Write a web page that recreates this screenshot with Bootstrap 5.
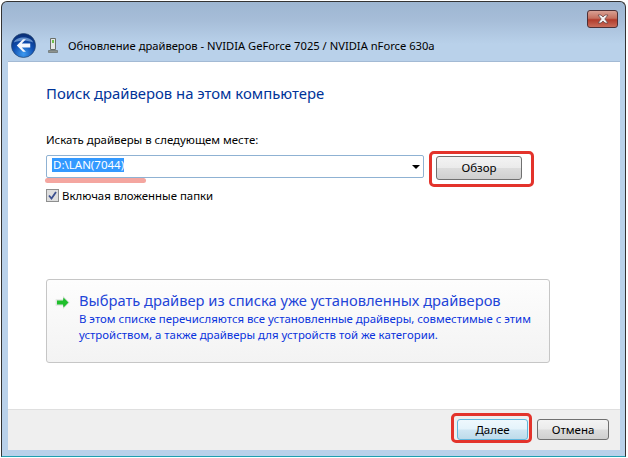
<!DOCTYPE html>
<html lang="ru">
<head>
<meta charset="utf-8">
<title>Обновление драйверов</title>
<link href="https://cdn.jsdelivr.net/npm/bootstrap@5.3.0/dist/css/bootstrap.min.css" rel="stylesheet">
<style>
html,body{margin:0;height:458px;overflow:hidden;background:#fff;}
body{font-family:"Noto Sans","Open Sans",sans-serif;font-size:11.4px;color:#000;line-height:15px;}
.aero-win{width:625px;height:456px;margin:1px 0 0 1px;border:1px solid #333;border-bottom-color:#1f9fb0;border-radius:6px 6px 0 0;background:linear-gradient(180deg,#9db6d2 0,#a6bdd8 18px,#b9d1ea 42px,#b9d1ea 100%);padding:0 5px 6px 6px;display:flex;flex-direction:column;box-sizing:border-box;}
.cap-close{width:31px;height:18px;margin-top:8px;margin-right:2px;border:1px solid #4d3036;border-radius:3px;background:linear-gradient(180deg,#d9a093 0,#c5705f 45%,#b13b2b 55%,#c96c5a 100%);flex:none;}
.cap-head{height:59px;padding-left:3px;flex:none;}
.cap-back{width:25px;height:25px;margin-top:31px;flex:none;}
.cap-dev{width:10px;height:15px;margin:36px 10px 0 12px;flex:none;}
.cap-title{margin-top:36px;font-size:11.2px;line-height:15px;color:#000;white-space:nowrap;}
.dlg-body{flex:1 1 auto;background:#fff;border-top:1px solid #a3bad4;padding:0 0 0 38px;min-height:0;}
.dlg-head{font-size:14.85px;line-height:20px;color:#003399;margin-top:21px;}
.dlg-label{margin-top:29px;}
.path-row{margin-top:8px;height:32px;}
.path-combo{width:378px;height:23px;border:1px solid #8fb2d3;border-radius:2px;padding:2px 0 0 5px;background:#fff;flex:none;}
.path-sel{background:#3399ff;color:#fff;width:72px;height:14px;line-height:14px;padding-left:1px;font-size:11.5px;}
.path-caret{width:0;height:0;border-left:4px solid transparent;border-right:4px solid transparent;border-top:4px solid #000;margin:7px 3px 0 0;}
.red-frame{border:3px solid #e3332b;border-radius:5px;display:flex;flex:none;}
.red-browse{width:105px;height:36px;margin:-4px 0 0 5px;padding:2px 0 0 4px;align-items:flex-start;justify-content:flex-start;}
.win-btn{font-family:inherit;font-size:11.5px;line-height:14px;padding:0;color:#000;border:1px solid #707070;border-radius:3px;background:linear-gradient(180deg,#f3f3f3 0,#ebebeb 48%,#dcdcdc 52%,#cfcfcf 100%);}
.win-btn:hover{color:#000;}
.browse-btn{width:86px;height:24px;}
.pink-stroke{width:101px;height:5px;border-radius:3px;background:#f4a6a0;margin:-9px 0 0 -1px;flex:none;}
.incl-row{margin-top:5px;}
.incl-box{width:13px;height:13px;border:1px solid #8e8f8f;background:#dedede;flex:none;margin-right:3px;}
.choice{width:504px;height:84px;margin-top:76px;border:1px solid #c6c6c6;border-radius:3px;background:linear-gradient(180deg,#fdfdfd 0,#f3f3f3 100%);padding:10px 0 0 8px;}
.choice-arrow{width:15px;height:15px;margin:5px 9px 0 0;flex:none;}
.choice-title{font-size:14.7px;line-height:20px;color:#1f45d8;white-space:nowrap;}
.choice-desc{font-size:11.4px;line-height:16px;color:#0a33dd;margin-top:1px;white-space:nowrap;}
.dlg-foot{height:41px;background:#efefef;border-top:1px solid #dfdfdf;padding-right:11px;flex:none;}
.red-next{width:81px;height:30px;margin-top:3px;margin-right:5px;align-items:flex-end;justify-content:flex-end;padding-right:1px;}
.next-btn{width:71px;height:21px;border-color:#5fb6dc;background:linear-gradient(180deg,#eef8fd 0,#e4f3fb 48%,#cfe6f3 52%,#bddbea 100%);}
.cancel-btn{width:72px;height:21px;margin-top:9px;}
</style>
</head>
<body>
<div class="aero-win">
  <div class="d-flex justify-content-end" style="height:0"><div class="cap-close d-flex align-items-center justify-content-center">
    <svg width="16" height="10" viewBox="0 0 16 10"><path d="M3 1h3l2 2 2-2h3l-3.200 4L13 9h-3L8 7 6 9H3l3.200-4z" fill="#f4f4f4" stroke="#6b4a4a" stroke-width=".8"/></svg>
  </div></div>
  <div class="cap-head d-flex">
    <svg class="cap-back" viewBox="0 0 26 26">
      <defs><radialGradient id="bb" cx=".5" cy=".85" r=".8"><stop offset="0" stop-color="#3c9af0"/><stop offset=".55" stop-color="#0f4fb2"/><stop offset="1" stop-color="#0a2f78"/></radialGradient></defs>
      <circle cx="13" cy="13" r="12.500" fill="url(#bb)" stroke="#26466f" stroke-width=".7"/>
      <path d="M3 10c2-7 18-7 20 0-5-2.500-15-2.500-20 0z" fill="#9cc6f2" opacity=".6"/>
      <path d="M12.500 6.500 6 13l6.500 6.500h3L11.200 15H20v-4h-8.800l4.300-4.500z" fill="#f4f8fd"/>
    </svg>
    <svg class="cap-dev" viewBox="0 0 10 15">
      <path d="M2.500.5h5v11h-5z" fill="#e4e8e6" stroke="#6a7068"/>
      <path d="M4 2h2v3H4z" fill="#6fbf4a"/>
      <path d="M.5 12.500h9v2H.5z" fill="#8e938e" stroke="#5c615c" stroke-width=".6"/>
    </svg>
    <div class="cap-title">Обновление драйверов - NVIDIA GeForce 7025 / NVIDIA nForce 630a</div>
  </div>
  <div class="dlg-body d-flex flex-column">
    <div class="dlg-head">Поиск драйверов на этом компьютере</div>
    <div class="dlg-label">Искать драйверы в следующем месте:</div>
    <div class="path-row d-flex align-items-start">
      <div class="path-combo d-flex justify-content-between">
        <div class="path-sel">D:\LAN(7044)</div>
        <div class="path-caret"></div>
      </div>
      <div class="red-frame red-browse"><button type="button" class="btn win-btn browse-btn">Обзор</button></div>
    </div>
    <div class="pink-stroke"></div>
    <div class="incl-row d-flex align-items-center">
      <div class="incl-box d-flex align-items-center justify-content-center">
        <svg width="9" height="9" viewBox="0 0 9 9"><path d="M1 4.500 3.500 7.500 8 1" fill="none" stroke="#3b4f8f" stroke-width="1.800"/></svg>
      </div>
      <span>Включая вложенные папки</span>
    </div>
    <div class="choice d-flex">
      <svg class="choice-arrow" viewBox="0 0 15 15">
        <path d="M8 .8 14.700 7.500 8 14.200V10.800H.6V4.200H8z" fill="#dfe3df"/>
        <path d="M8.500 2.500 13.500 7.500 8.500 12.500 8 9.500H2V5.500H8z" fill="#1fbf2c"/>
      </svg>
      <div>
        <div class="choice-title">Выбрать драйвер из списка уже установленных драйверов</div>
        <div class="choice-desc">В этом списке перечисляются все установленные драйверы, совместимые с этим<br>устройством, а также драйверы для устройств той же категории.</div>
      </div>
    </div>
  </div>
  <div class="dlg-foot d-flex justify-content-end">
    <div class="red-frame red-next"><button type="button" class="btn win-btn next-btn">Далее</button></div>
    <button type="button" class="btn win-btn cancel-btn">Отмена</button>
  </div>
</div>
<script src="https://cdn.jsdelivr.net/npm/bootstrap@5.3.0/dist/js/bootstrap.bundle.min.js"></script>
</body>
</html>
